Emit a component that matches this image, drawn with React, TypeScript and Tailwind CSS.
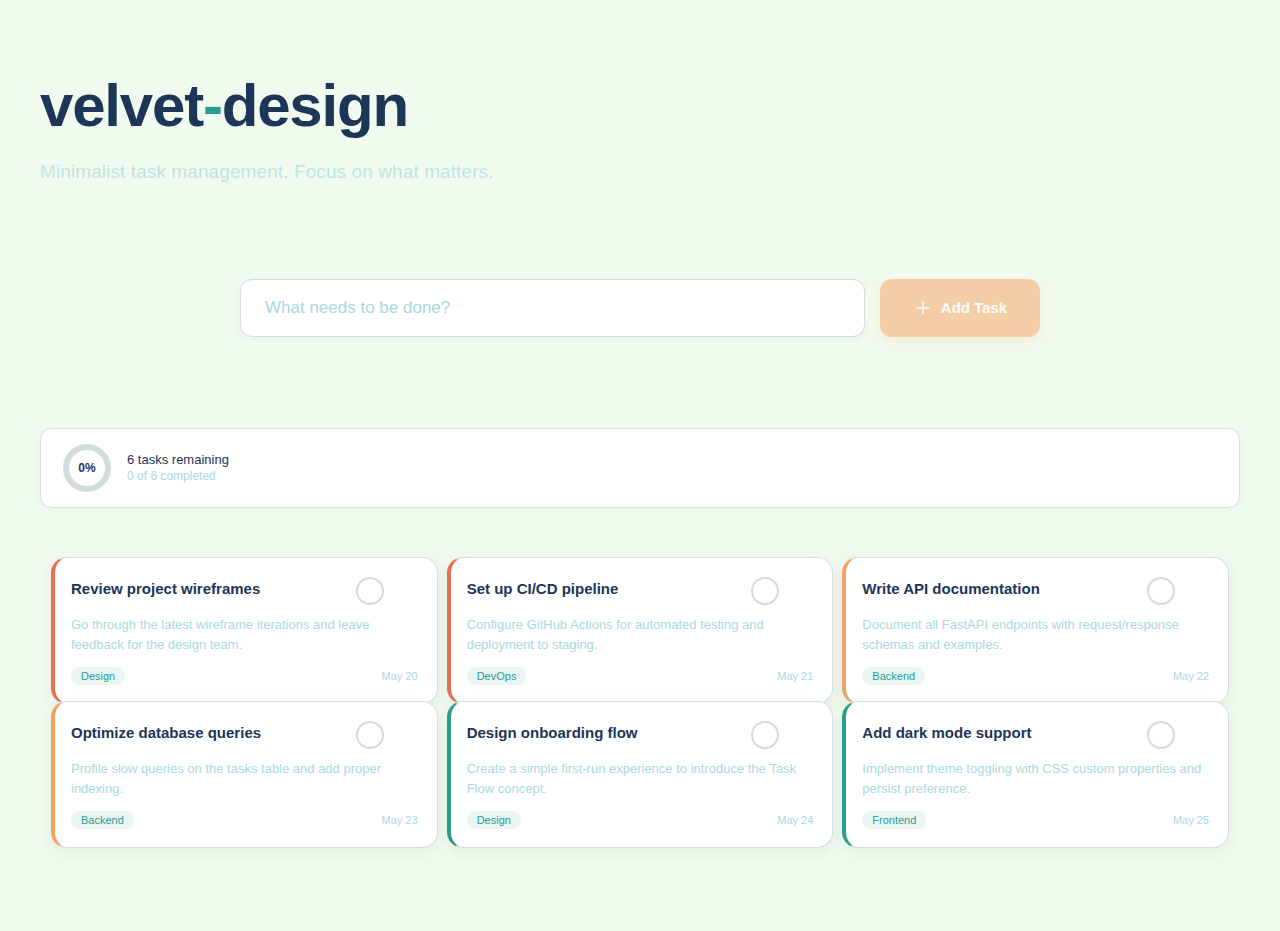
import { Plus, Trash2 } from "lucide-react";
import { useState } from "react";

type Task = {
  id: number;
  title: string;
  description: string;
  tag: string;
  due: string;
  priority: "high" | "medium" | "low";
  done: boolean;
};

const TASKS: Task[] = [
  {
    id: 1,
    title: "Review project wireframes",
    description: "Go through the latest wireframe iterations and leave feedback for the design team.",
    tag: "Design",
    due: "May 20",
    priority: "high",
    done: false,
  },
  {
    id: 2,
    title: "Set up CI/CD pipeline",
    description: "Configure GitHub Actions for automated testing and deployment to staging.",
    tag: "DevOps",
    due: "May 21",
    priority: "high",
    done: false,
  },
  {
    id: 3,
    title: "Write API documentation",
    description: "Document all FastAPI endpoints with request/response schemas and examples.",
    tag: "Backend",
    due: "May 22",
    priority: "medium",
    done: false,
  },
  {
    id: 4,
    title: "Optimize database queries",
    description: "Profile slow queries on the tasks table and add proper indexing.",
    tag: "Backend",
    due: "May 23",
    priority: "medium",
    done: false,
  },
  {
    id: 5,
    title: "Design onboarding flow",
    description: "Create a simple first-run experience to introduce the Task Flow concept.",
    tag: "Design",
    due: "May 24",
    priority: "low",
    done: false,
  },
  {
    id: 6,
    title: "Add dark mode support",
    description: "Implement theme toggling with CSS custom properties and persist preference.",
    tag: "Frontend",
    due: "May 25",
    priority: "low",
    done: false,
  },
];

// 우선순위별 왼쪽 띠 색상
const priorityBorder: Record<Task["priority"], string> = {
  high: "border-l-[#e76f51]",
  medium: "border-l-[#f4a261]",
  low: "border-l-[#2a9d8f]",
};

function ProgressRing({ percent }: { percent: number }) {
  const r = 21;
  const c = 2 * Math.PI * r;
  return (
    <div className="relative h-12 w-12 shrink-0">
      <svg width="48" height="48" viewBox="0 0 48 48" className="-rotate-90">
        <circle cx="24" cy="24" r={r} fill="none" stroke="#d3dcdd" strokeWidth="6" />
        <circle
          cx="24"
          cy="24"
          r={r}
          fill="none"
          stroke="#2a9d8f"
          strokeWidth="6"
          strokeDasharray={c}
          strokeDashoffset={c - (percent / 100) * c}
          strokeLinecap="round"
        />
      </svg>
      <span className="absolute inset-0 flex items-center justify-center text-xs font-bold text-[#1d3557]">
        {percent}%
      </span>
    </div>
  );
}

function TaskCard({ task, onToggle }: { task: Task; onToggle: (id: number) => void }) {
  return (
    <div
      className={`relative -mb-[3px] rounded-2xl border border-[#d6dee0] border-l-4 ${priorityBorder[task.priority]} bg-white pt-[19px] pr-[19px] pb-[18px] pl-4 shadow-[0_4px_14px_rgba(29,53,87,0.07)]`}
    >
      <div className="flex items-start gap-2">
        <h3 className="flex-1 pt-px text-[15px] leading-[22px] font-bold text-[#1d3557]">{task.title}</h3>
        <button
          onClick={() => onToggle(task.id)}
          className="h-7 w-7 shrink-0 rounded-full border-2 border-[#d3dcdd] bg-white"
          aria-label="완료 표시"
        />
        <button className="flex h-7 w-[26px] items-center justify-center text-[#e76f51] opacity-0">
          <Trash2 size={15} />
        </button>
      </div>

      <p className="mt-[10px] text-[13px] leading-5 text-[#a8dadc]">{task.description}</p>

      <div className="mt-[12px] flex items-center justify-between">
        <span className="rounded-full bg-[#eaf5f4] px-[10px] py-[2px] text-[11px] leading-[14px] text-[#2a9d8f]">
          {task.tag}
        </span>
        <span className="text-[11px] text-[#a8dadc]">{task.due}</span>
      </div>
    </div>
  );
}

export default function App() {
  const [tasks, setTasks] = useState<Task[]>(TASKS);
  const [draft, setDraft] = useState("");

  const doneCount = tasks.filter((t) => t.done).length;
  const remaining = tasks.length - doneCount;
  const percent = tasks.length ? Math.round((doneCount / tasks.length) * 100) : 0;

  const handleToggle = (id: number) => {
    setTasks((prev) => prev.map((t) => (t.id === id ? { ...t, done: !t.done } : t)));
  };

  const handleAdd = () => {
    if (!draft.trim()) return;
    setTasks((prev) => [
      ...prev,
      {
        id: Date.now(),
        title: draft.trim(),
        description: "",
        tag: "Design",
        due: "May 26",
        priority: "low",
        done: false,
      },
    ]);
    setDraft("");
  };

  return (
    <div className="min-h-screen bg-[#f1faee] px-10 pt-[76px] pb-20 font-['Liberation_Sans',Arial,sans-serif]">
      {/* 헤더 */}
      <header>
        <h1 className="text-[60px] leading-none font-bold tracking-[-0.02em] text-[#1d3557]">
          velvet<span className="text-[#2a9d8f]">-</span>design
        </h1>
        <p className="mt-[22px] text-[19px] leading-7 tracking-[0.005em] text-[#a8dadc]/70">
          Minimalist task management. Focus on what matters.
        </p>
      </header>

      {/* 입력 폼 */}
      <div className="mx-auto mt-[93px] flex w-[800px] items-center gap-[15px]">
        <input
          value={draft}
          onChange={(e) => setDraft(e.target.value)}
          placeholder="What needs to be done?"
          className="h-[58px] flex-1 rounded-xl border border-[#d3dcdd] bg-white px-6 text-[17px] text-[#1d3557] shadow-[0_2px_8px_rgba(29,53,87,0.04)] outline-none placeholder:text-[#a8dadc]"
        />
        <button
          onClick={handleAdd}
          disabled={!draft.trim()}
          className="flex h-[58px] w-40 items-center justify-center gap-2 rounded-xl bg-[#f4a261] text-[15px] font-bold text-white shadow-[0_4px_10px_rgba(244,162,97,0.2)] disabled:opacity-50"
        >
          <Plus size={20} strokeWidth={2} />
          Add Task
        </button>
      </div>

      {/* 진행 현황 */}
      <div className="mt-[91px] flex h-20 items-center gap-4 rounded-xl border border-[#d6dee0] bg-white px-[22px] shadow-[0_2px_8px_rgba(29,53,87,0.03)]">
        <ProgressRing percent={percent} />
        <div>
          <p className="text-[13px] leading-4 text-[#1d3557]">{remaining} tasks remaining</p>
          <p className="text-xs leading-4 text-[#a8dadc]">
            {doneCount} of {tasks.length} completed
          </p>
        </div>
      </div>

      {/* 작업 카드 목록 */}
      <div className="mt-[49px] grid grid-cols-3 gap-x-[9px] px-[11px]">
        {tasks.map((task) => (
          <TaskCard key={task.id} task={task} onToggle={handleToggle} />
        ))}
      </div>
    </div>
  );
}
